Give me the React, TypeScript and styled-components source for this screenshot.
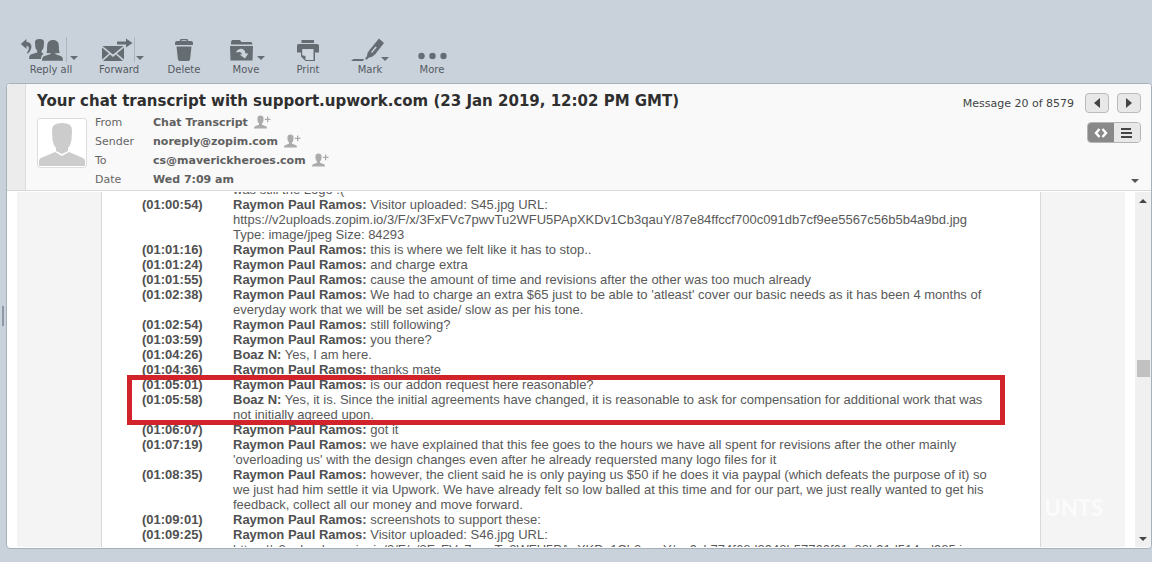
import React from 'react';
import styled, { createGlobalStyle, css } from 'styled-components';

const Global = createGlobalStyle`
  *, *::before, *::after { box-sizing: border-box; }
  body { margin: 0; background: #c9d1db; font-family: Verdana, 'DejaVu Sans', sans-serif; font-size: 11px; color: #555; }
  button { font: inherit; color: inherit; background: none; border: 0; padding: 0; cursor: pointer; }
  svg { display: block; }
`;

const Page = styled.div`
  display: flex;
  flex-direction: column;
  height: 100vh;
  overflow: hidden;
  padding-bottom: 13px;
`;

const Toolbar = styled.nav`
  display: flex;
  align-items: flex-end;
  height: 83px;
  padding: 0 0 6px 20px;
  flex: none;
`;

const ToolButton = styled.button<{ $width: number }>`
  width: ${p => p.$width}px;
  flex: none;
  display: flex;
  flex-direction: column;
  align-items: center;
  font-size: 10px;
  line-height: 14px;
  color: #555b61;
  svg { color: #656c72; }
`;

const Workspace = styled.div`
  display: flex;
  flex: 1;
  min-height: 0;
`;

const Splitter = styled.div`
  width: 6px;
  flex: none;
  display: flex;
  align-items: center;
  padding-left: 2px;
  &::before { content: ''; width: 2px; height: 20px; background: #8f98a3; }
`;

const Panel = styled.main`
  flex: 1;
  min-width: 0;
  display: flex;
  flex-direction: column;
  background: #fff;
  border: 1px solid #a5b1bb;
  border-radius: 4px;
  overflow: hidden;
`;

const Header = styled.header`
  display: flex;
  flex: none;
  height: 107px;
  background: #f9f9f9;
  border-bottom: 1px solid #d3d9dc;
`;

const Strip = styled.div`
  width: 19px;
  background: #ececec;
  border-right: 1px solid #dcdcdc;
`;

const Summary = styled.div`
  flex: 1;
  padding: 7px 0 0 11px;
`;

const Title = styled.h1`
  margin: 0;
  font-size: 15px;
  line-height: 20px;
  color: #2f2f2f;
`;

const Details = styled.div`
  display: flex;
  gap: 8px;
`;

const Avatar = styled.div`
  width: 50px;
  height: 50px;
  margin-top: 7px;
  border: 1px solid #ddd;
  border-radius: 3px;
  background: #fff;
`;

const Fields = styled.dl`
  display: grid;
  grid-template-columns: 58px auto;
  grid-auto-rows: 19px;
  align-content: start;
  margin: 2px 0 0;
  line-height: 19px;
  dt { color: #666; }
  dd { margin: 0; display: flex; align-items: center; gap: 5px; font-weight: bold; color: #606060; }
`;

const Side = styled.div`
  display: flex;
  flex-direction: column;
  align-items: flex-end;
  padding: 9px 10px 6px 0;
`;

const Pager = styled.div`
  display: flex;
  align-items: center;
  gap: 8px;
  color: #444;
  span { margin-right: 3px; }
`;

const keyFace = css`
  display: flex;
  align-items: center;
  justify-content: center;
  background: #e8e8e8;
  color: #444;
`;

const PageButton = styled.button`
  ${keyFace}
  width: 24px;
  height: 20px;
  border: 1px solid #bbb;
  border-radius: 4px;
`;

const Toggle = styled.div`
  display: flex;
  margin-top: 9px;
  height: 21px;
  border: 1px solid #b5b5b5;
  border-radius: 4px;
  overflow: hidden;
`;

const ToggleButton = styled.button<{ $active?: boolean }>`
  ${keyFace}
  width: 26px;
  ${p => p.$active && 'background: #898989; color: #fff;'}
`;

const Expand = styled.button`
  margin: auto 2px 0 0;
`;

const Body = styled.div`
  display: flex;
  flex: 1;
  min-height: 0;
  padding: 1px 0 1px 10px;
`;

const Gutter = styled.div`
  width: 84px;
  flex: none;
  background: #f4f4f4;
`;

const Paper = styled.section`
  flex: 1;
  min-width: 0;
  overflow: hidden;
  border: solid #d8d8d8;
  border-width: 0 1px;
  padding: 0 35px 0 25px;
`;

const Transcript = styled.table`
  width: 100%;
  margin-top: -10px;
  border-collapse: collapse;
  table-layout: fixed;
  font: 13px/15px Arial, 'Liberation Sans', sans-serif;
  color: #595959;
  td, th { padding: 0; text-align: left; vertical-align: top; }
  th { padding-left: 15px; width: 106px; color: #505050; }
  td { overflow-wrap: break-word; padding-right: 5px; }
  b { color: #505050; }
`;

const Group = styled.tbody<{ $marked?: boolean }>`
  position: relative;
  ${p => p.$marked && css`
    &::after {
      content: '';
      position: absolute;
      inset: -2px 0 -3px 0;
      border: 5px solid #d2232a;
      pointer-events: none;
    }
  `}
`;

const Scrollbar = styled.div`
  width: 16px;
  margin-left: 10px;
  flex: none;
  display: flex;
  flex-direction: column;
  align-items: center;
  background: #f0f0f0;
  color: #444;
  button { height: 17px; width: 16px; display: flex; align-items: center; justify-content: center; }
`;

const Track = styled.div`
  flex: 1;
  display: flex;
  flex-direction: column;
  &::before { content: ''; flex: 151; }
  &::after { content: ''; flex: 153; }
`;

const Thumb = styled.div`
  width: 13px;
  height: 17px;
  background: #c1c1c1;
`;

const Watermark = styled.div`
  position: absolute;
  right: 49px;
  bottom: 42px;
  font: bold 22px/24px Lato, sans-serif;
  color: #fff;
  opacity: 0.7;
  pointer-events: none;
`;

const Triangle = ({ dir }: { dir: 'up' | 'down' | 'left' | 'right' }) => {
  const shapes = { up: 'M0 5h8L4 1z', down: 'M0 1h8L4 5z', left: 'M6 0v10L0 5z', right: 'M0 0v10l6-5z' };
  const tall = dir === 'left' || dir === 'right';
  return (
    <svg width={tall ? 6 : 8} height={tall ? 10 : 6} fill="currentColor" aria-hidden="true">
      <path d={shapes[dir]} />
    </svg>
  );
};

const AddContact = () => (
  <svg width="18" height="15" viewBox="0 0 18 15" fill="#ababab" aria-label="Add contact">
    <path d="M4.500 3q0-2.500 3-2.500t3 2.500v2.500q-.3 2-1.500 3v1.300l4 1.400q1 .5 1 2.300H1q0-1.800 1-2.300l4-1.400V8.500q-1.200-1-1.500-3zM14 1.500h1.300v2.200h2.200V5h-2.200v2.200H14V5h-2.200V3.700H14z" />
  </svg>
);

const tools = [
  {
    label: 'Reply all', width: 62, icon: (
      <svg width="62" height="26" viewBox="0 0 62 26" fill="currentColor">
        <path d="M.8 7 6.500 2v3c5.500.2 7 6 1.500 11.500L6.800 16C9.500 12 9.500 9.200 6.500 9v3z" />
        <path d="M15 5q0-3 4.500-3T24 5l-.3 5q-.5 2.500-2 3.500v2.300l2 .9q-2.500 1.500-2.700 4.300v1H9q0-4 2.500-4.800l5.700-1.700v-2q-1.500-1-1.900-3.500z" />
        <path d="M26.500 16c1-3 .3-5 .8-8.500Q28 3 33 3t5.700 4.500c.5 3.500-.2 5.500 1.100 8.500l-4.600.3v.8l5.300 1.900q2.500.8 2.500 4.700H22q0-3.900 2.500-4.700l6.300-1.900v-.8z" />
        <path d="M46.500 0v25" stroke="#aeb5bd" /><path d="M50 19h8l-4 4z" />
      </svg>
    ),
  },
  {
    label: 'Forward', width: 74, icon: (
      <svg width="50" height="26" viewBox="0 0 50 26" fill="currentColor">
        <path d="M23 4.500h9V1.500l6.500 4.500-6.500 4.500V7.500h-9z" />
        <path d="M8 10.500l7 6-7 6zM8.500 9H29.500L19 17.500zM30 10.500v12l-7-6zM9 24l7-6.500 3 2.500 3-2.500L29 24z" />
        <path d="M40.500 0v25" stroke="#aeb5bd" /><path d="M42 19h8l-4 4z" transform="translate(0 0)" />
      </svg>
    ),
  },
  {
    label: 'Delete', width: 56, icon: (
      <svg width="20" height="26" viewBox="0 0 20 26" fill="currentColor">
        <path fillRule="evenodd" d="M1 8V6q0-2 2-2h3V3q0-1 1-1h6q1 0 1 1v1h3q2 0 2 2v2zM7.500 3.300V4h5v-.7zM2.500 9.500h15l-1.400 12.500q-.3 2-1.800 2H5.700q-1.500 0-1.800-2z" />
      </svg>
    ),
  },
  {
    label: 'Move', width: 68, icon: (
      <svg width="38" height="26" viewBox="0 0 38 26" fill="currentColor">
        <path d="M4 7.500V5l1-2h8l1.500 2H24q1.500 0 1.500 2.500zM3 9h23l-.5 14.500h-22z" />
        <path d="M9 15.500c2-5 9-5 9.500 1h2.800L18 21.500l-5.500-4H15c-.5-3-3-3-6-2z" fill="#cbd3dc" />
        <path d="M30 19h8l-4 4z" />
      </svg>
    ),
  },
  {
    label: 'Print', width: 56, icon: (
      <svg width="24" height="26" viewBox="0 0 24 26" fill="currentColor">
        <path d="M5.500 3h12.500v3H5.500zM2.500 7h18.500q2 0 2 2v6.500h-4V12H5v3.500H1V9q0-2 1.500-2z" />
        <path d="M6 13h12v9.500h-8L6 18z" fill="#d0d7df" /><path d="M6.200 12v6.200l3.300.8v4H17.500V12H19v12H9.500L5 19.500V12z" />
      </svg>
    ),
  },
  {
    label: 'Mark', width: 68, icon: (
      <svg width="38" height="26" viewBox="0 0 38 26" fill="currentColor">
        <path fillRule="evenodd" d="M28 1.500 33 6 24 17.500q-3 3-6 3l-2.500 2.200-1.500-1 2-2.700q-.2-3 2.500-6zM24.500 9.500l-4.500 5.500 1 1 4.700-5.500zM2.500 22h10.500l-1 2H0z" />
        <path d="M30 20h8l-4 4z" />
      </svg>
    ),
  },
  {
    label: 'More', width: 56, icon: (
      <svg width="30" height="26" viewBox="0 0 30 26" fill="currentColor">
        <circle cx="4.500" cy="19" r="3.200" /><circle cx="15.500" cy="19" r="3.200" /><circle cx="26.500" cy="19" r="3.200" />
      </svg>
    ),
  },
];

const fields = [
  ['From', 'Chat Transcript', true],
  ['Sender', 'noreply@zopim.com', true],
  ['To', 'cs@maverickheroes.com', true],
  ['Date', 'Wed 7:09 am', false],
] as const;

type Line = { time?: string; who?: string; text: React.ReactNode };
const R = 'Raymon Paul Ramos:';
const B = 'Boaz N:';

const before: Line[] = [
  { text: 'was still the Logo :(' },
  { time: '01:00:54', who: R, text: <>Visitor uploaded: S45.jpg URL:<br />https://v2uploads.zopim.io/3/F/x/3FxFVc7pwvTu2WFU5PApXKDv1Cb3qauY/87e84ffccf700c091db7cf9ee5567c56b5b4a9bd.jpg<br />Type: image/jpeg Size: 84293</> },
  { time: '01:01:16', who: R, text: 'this is where we felt like it has to stop..' },
  { time: '01:01:24', who: R, text: 'and charge extra' },
  { time: '01:01:55', who: R, text: 'cause the amount of time and revisions after the other was too much already' },
  { time: '01:02:38', who: R, text: "We had to charge an extra $65 just to be able to 'atleast' cover our basic needs as it has been 4 months of everyday work that we will be set aside/ slow as per his tone." },
  { time: '01:02:54', who: R, text: 'still following?' },
  { time: '01:03:59', who: R, text: 'you there?' },
  { time: '01:04:26', who: B, text: 'Yes, I am here.' },
  { time: '01:04:36', who: R, text: 'thanks mate' },
];
const marked: Line[] = [
  { time: '01:05:01', who: R, text: 'is our addon request here reasonable?' },
  { time: '01:05:58', who: B, text: 'Yes, it is. Since the initial agreements have changed, it is reasonable to ask for compensation for additional work that was not initially agreed upon.' },
];
const after: Line[] = [
  { time: '01:06:07', who: R, text: 'got it' },
  { time: '01:07:19', who: R, text: "we have explained that this fee goes to the hours we have all spent for revisions after the other mainly 'overloading us' with the design changes even after he already requersted many logo files for it" },
  { time: '01:08:35', who: R, text: 'however, the client said he is only paying us $50 if he does it via paypal (which defeats the purpose of it) so we just had him settle it via Upwork. We have already felt so low balled at this time and for our part, we just really wanted to get his feedback, collect all our money and move forward.' },
  { time: '01:09:01', who: R, text: 'screenshots to support these:' },
  { time: '01:09:25', who: R, text: <>Visitor uploaded: S46.jpg URL:<br />https://v2uploads.zopim.io/3/F/x/3FxFVc7pwvTu2WFU5PApXKDv1Cb3qauY/ea9cb774f68d3948b57760f61c88b91d514ad985.jpg</> },
];

const Lines = ({ lines }: { lines: Line[] }) => (
  <>
    {lines.map((l, i) => (
      <tr key={i}>
        <th scope="row">{l.time && `(${l.time})`}</th>
        <td>{l.who && <><b>{l.who}</b> </>}{l.text}</td>
      </tr>
    ))}
  </>
);

export default function App() {
  return (
    <Page>
      <Global />
      <Toolbar>
        {tools.map(t => (
          <ToolButton key={t.label} $width={t.width}>{t.icon}{t.label}</ToolButton>
        ))}
      </Toolbar>
      <Workspace>
        <Splitter />
        <Panel>
          <Header>
            <Strip />
            <Summary>
              <Title>Your chat transcript with support.upwork.com (23 Jan 2019, 12:02 PM GMT)</Title>
              <Details>
                <Avatar>
                  <svg width="48" height="48" viewBox="0 0 48 48" fill="#ccc">
                    <path d="M14 11q0-7 10-7t10 7l-.5 10q-.8 5-3.500 8v3l-6 3-6-3v-3q-2.700-3-3.500-8z" />
                    <path d="M1 47v-5q0-2 2-3l14-6 7 4 7-4 14 6q2 1 2 3v5z" />
                  </svg>
                </Avatar>
                <Fields>
                  {fields.map(([name, value, contact]) => (
                    <React.Fragment key={name}>
                      <dt>{name}</dt>
                      <dd>{value}{contact && <AddContact />}</dd>
                    </React.Fragment>
                  ))}
                </Fields>
              </Details>
            </Summary>
            <Side>
              <Pager>
                <span>Message 20 of 8579</span>
                <PageButton aria-label="Previous message"><Triangle dir="left" /></PageButton>
                <PageButton aria-label="Next message"><Triangle dir="right" /></PageButton>
              </Pager>
              <Toggle>
                <ToggleButton $active aria-label="HTML view">
                  <svg width="14" height="10" fill="none" stroke="currentColor" strokeWidth="2.400"><path d="M5.500 1 2 5l3.500 4M8.500 1 12 5 8.500 9" /></svg>
                </ToggleButton>
                <ToggleButton aria-label="Plain text view">
                  <svg width="12" height="10" stroke="currentColor" strokeWidth="2"><path d="M0 1h10M0 5h11M0 9h11" /></svg>
                </ToggleButton>
              </Toggle>
              <Expand aria-label="Show details"><Triangle dir="down" /></Expand>
            </Side>
          </Header>
          <Body>
            <Gutter />
            <Paper>
              <Transcript>
                <Group><Lines lines={before} /></Group>
                <Group $marked><Lines lines={marked} /></Group>
                <Group><Lines lines={after} /></Group>
              </Transcript>
            </Paper>
            <Gutter />
            <Scrollbar>
              <button aria-label="Scroll up"><Triangle dir="up" /></button>
              <Track><Thumb /></Track>
              <button aria-label="Scroll down"><Triangle dir="down" /></button>
            </Scrollbar>
          </Body>
        </Panel>
      </Workspace>
      <Watermark>UNTS</Watermark>
    </Page>
  );
}
